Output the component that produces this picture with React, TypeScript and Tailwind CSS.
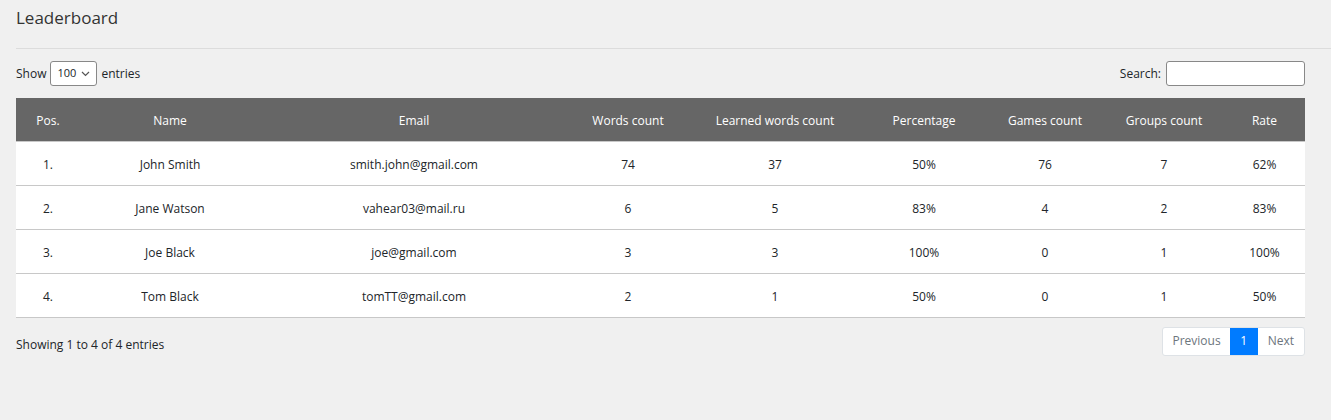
import React from 'react';

const rows = [
  { pos: '1.', name: 'John Smith', email: 'smith.john@gmail.com', words: 74, learned: 37, pct: '50%', games: 76, groups: 7, rate: '62%' },
  { pos: '2.', name: 'Jane Watson', email: 'vahear03@mail.ru', words: 6, learned: 5, pct: '83%', games: 4, groups: 2, rate: '83%' },
  { pos: '3.', name: 'Joe Black', email: 'joe@gmail.com', words: 3, learned: 3, pct: '100%', games: 0, groups: 1, rate: '100%' },
  { pos: '4.', name: 'Tom Black', email: 'tomTT@gmail.com', words: 2, learned: 1, pct: '50%', games: 0, groups: 1, rate: '50%' },
];

const headers = ['Pos.', 'Name', 'Email', 'Words count', 'Learned words count', 'Percentage', 'Games count', 'Groups count', 'Rate'];

export default function App() {
  return (
    <div className="min-h-[420px] w-[1331px] bg-[#f0f0f0] text-[#212529] font-['Open_Sans',sans-serif]">
      {/* Title */}
      <div className="pl-4 pt-[6px] h-[48px]">
        <h1 className="text-[17px] leading-[24px] text-[#333]">Leaderboard</h1>
      </div>
      <div className="ml-4 border-t border-[#dcdcdc]" />

      <div className="px-4 pr-[26px]">
        {/* Controls */}
        <div className="flex items-center justify-between h-[49px] text-[12px]">
          <label className="flex items-center gap-1">
            Show
            <span className="flex items-center justify-between w-[47px] h-[25px] bg-white border border-[#888] rounded-[3px] px-[6px] text-[11px]">
              100
              <svg width="9" height="6" viewBox="0 0 9 6" fill="none" stroke="#555" strokeWidth="1.2">
                <path d="M1 1l3.5 3.5L8 1" />
              </svg>
            </span>
            entries
          </label>
          <label className="flex items-center gap-[5px]">
            Search:
            <span className="block w-[139px] h-[25px] bg-white border border-[#888] rounded-[3px]" />
          </label>
        </div>

        {/* Table */}
        <table className="w-[1289px] table-fixed border-collapse text-[12px] text-center">
          <colgroup>
            <col className="w-[64px]" />
            <col className="w-[180px]" />
            <col className="w-[308px]" />
            <col className="w-[120px]" />
            <col className="w-[174px]" />
            <col className="w-[124px]" />
            <col className="w-[118px]" />
            <col className="w-[120px]" />
            <col className="w-[81px]" />
          </colgroup>
          <thead>
            <tr className="bg-[#666] text-white h-[43px]">
              {headers.map((h) => (
                <th key={h} className="font-normal pt-[3px]">{h}</th>
              ))}
            </tr>
          </thead>
          <tbody>
            {rows.map((r) => (
              <tr key={r.pos} className="bg-white h-[44px] border-b border-[#c8c8c8] first:border-t [&>td]:pt-[3px]">
                <td>{r.pos}</td>
                <td>{r.name}</td>
                <td>{r.email}</td>
                <td>{r.words}</td>
                <td>{r.learned}</td>
                <td>{r.pct}</td>
                <td>{r.games}</td>
                <td>{r.groups}</td>
                <td>{r.rate}</td>
              </tr>
            ))}
          </tbody>
        </table>

        {/* Footer */}
        <div className="flex items-center justify-between mt-[9px] text-[12px]">
          <span className="pt-[7px]">Showing 1 to 4 of 4 entries</span>
          <div className="flex h-[29px] border border-[#dee2e6] rounded-[3px] overflow-hidden bg-white">
            <span className="flex items-center px-[9px] text-[#6c757d]">Previous</span>
            <span className="flex items-center justify-center w-[28px] bg-[#007bff] text-white">1</span>
            <span className="flex items-center px-[10px] text-[#6c757d]">Next</span>
          </div>
        </div>
      </div>
    </div>
  );
}
